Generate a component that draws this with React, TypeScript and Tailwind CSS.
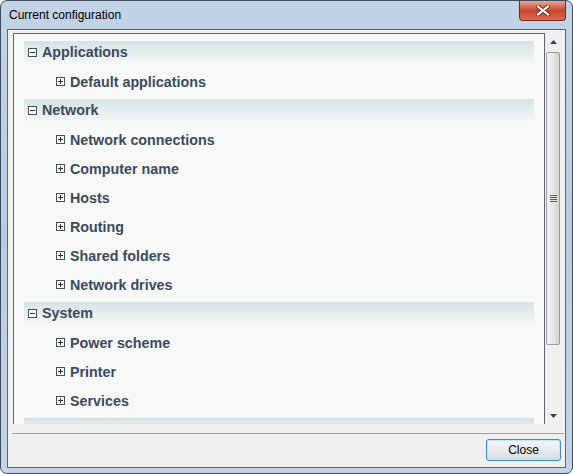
import React from 'react';

type Group = { title: string; items: string[] };

const groups: Group[] = [
  { title: 'Applications', items: ['Default applications'] },
  {
    title: 'Network',
    items: ['Network connections', 'Computer name', 'Hosts', 'Routing', 'Shared folders', 'Network drives'],
  },
  { title: 'System', items: ['Power scheme', 'Printer', 'Services'] },
];

const Toggle: React.FC<{ open: boolean }> = ({ open }) => (
  <svg width="9" height="9" viewBox="0 0 9 9" className="shrink-0">
    <rect x="0.5" y="0.5" width="8" height="8" fill="#fbfcfc" stroke="#46505c" />
    <line x1="2" y1="4.5" x2="7" y2="4.5" stroke="#2d3440" />
    {!open && <line x1="4.5" y1="2" x2="4.5" y2="7" stroke="#2d3440" />}
  </svg>
);

const ScrollBar: React.FC = () => (
  <div className="w-[17px] flex flex-col bg-[#f0f0f0]">
    <div className="h-[17px] flex items-center justify-center">
      <svg width="7" height="4" viewBox="0 0 7 4">
        <path d="M0 4 L3.5 0 L7 4 Z" fill="#3f3f3f" />
      </svg>
    </div>
    <div className="flex-1 flex flex-col pt-[2px] pb-[62px] pl-[1px] pr-[2px]">
      <div className="flex-1 rounded-[2px] border border-[#9b9b9b] bg-gradient-to-r from-[#f3f3f3] via-[#e6e6e6] to-[#d2d2d2] flex items-center justify-center">
        <div className="flex flex-col gap-[1px]">
          <div className="w-[7px] h-[1px] bg-[#5f5f5f]" />
          <div className="w-[7px] h-[1px] bg-[#5f5f5f]" />
          <div className="w-[7px] h-[1px] bg-[#5f5f5f]" />
          <div className="w-[7px] h-[1px] bg-[#5f5f5f]" />
        </div>
      </div>
    </div>
    <div className="h-[17px] flex items-center justify-center">
      <svg width="7" height="4" viewBox="0 0 7 4">
        <path d="M0 0 L7 0 L3.5 4 Z" fill="#3f3f3f" />
      </svg>
    </div>
  </div>
);

export default function App() {
  return (
    <div
      className="w-[573px] h-[474px] flex flex-col rounded-[7px] border border-[#3f4c5c] bg-gradient-to-b from-[#c2d3e7] via-[#b9cbe0] to-[#c4d4e6] overflow-hidden"
      style={{ fontFamily: '"Liberation Sans", Arial, sans-serif' }}
    >
      {/* title bar */}
      <div className="h-[28px] flex items-start justify-between">
        <span className="pl-[8px] pt-[7px] text-[12px] leading-[14px] text-black">Current configuration</span>
        <div className="mr-[6px] w-[47px] h-[20px] rounded-b-[4px] border border-t-0 border-[#6e2a20] bg-gradient-to-b from-[#e9a796] via-[#c9452c] to-[#d96a4d] flex items-center justify-center">
          <svg width="14" height="11" viewBox="0 0 14 11">
            <path d="M2 1.5 L12 9.5 M12 1.5 L2 9.5" stroke="#5a2a22" strokeWidth="4" strokeLinecap="square" />
            <path d="M2 1.5 L12 9.5 M12 1.5 L2 9.5" stroke="#ffffff" strokeWidth="2.2" strokeLinecap="square" />
          </svg>
        </div>
      </div>

      {/* client area */}
      <div className="flex-1 mx-[6px] mb-[5px] border border-[#56677a] bg-[#f0f0f0] flex flex-col">
        <div className="flex pt-[3px] pl-[5px] pr-[3px] h-[394px]">
          <div className="flex-1 border-l border-t border-r border-[#5e6770] bg-[#f7f9f9] overflow-hidden pt-[4px] px-[10px]">
            {groups.map((g) => (
              <div key={g.title}>
                <div className="h-[29px] pt-[3px]">
                  <div className="h-[22px] flex items-center gap-[5px] pl-[4px] bg-gradient-to-b from-[#d7e2e2] to-[#f3f7f7]">
                    <Toggle open />
                    <span className="text-[14.3px] font-bold text-[#3c4a5d] leading-[16px]">{g.title}</span>
                  </div>
                </div>
                {g.items.map((it) => (
                  <div key={it} className="h-[29px] flex items-center gap-[5px] pl-[32px]">
                    <Toggle open={false} />
                    <span className="text-[14.3px] font-bold text-[#3c4a5d] leading-[16px]">{it}</span>
                  </div>
                ))}
              </div>
            ))}
            {/* next group header, scrolled out of view */}
            <div className="h-[29px] pt-[3px]">
              <div className="h-[22px] bg-gradient-to-b from-[#d7e2e2] to-[#f3f7f7]" />
            </div>
          </div>
          <ScrollBar />
        </div>
        <div className="h-[9px]" />
        <div className="ml-[4px] mr-[1px] border-t border-[#a0a0a0] flex-1 flex justify-end pt-[5px] pr-[3px]">
          <button className="w-[75px] h-[22px] rounded-[3px] border border-[#3c8bc4] bg-gradient-to-b from-[#f3f6f8] via-[#e7ebee] to-[#d6dde2] text-[12px] leading-[14px] text-black shadow-[inset_0_0_0_1px_#c5e6f8]">
            Close
          </button>
        </div>
      </div>
    </div>
  );
}
